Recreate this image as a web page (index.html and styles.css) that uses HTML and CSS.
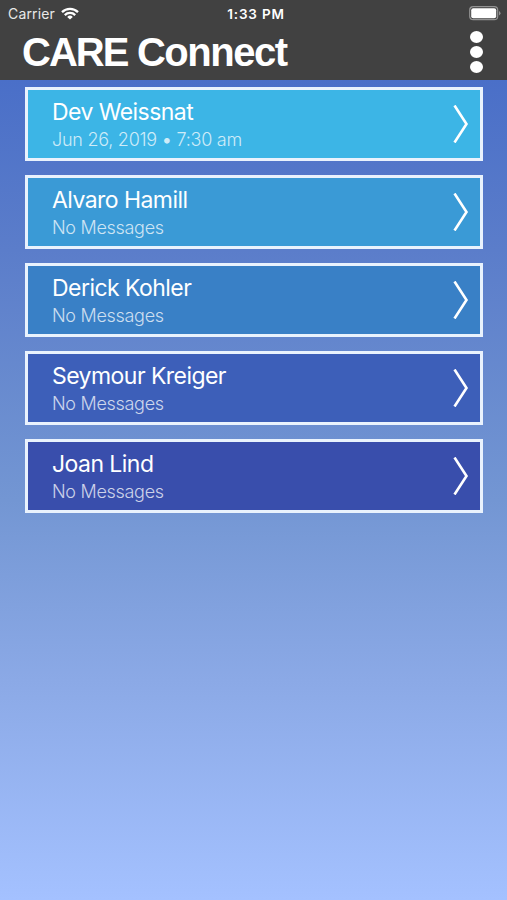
FILE: index.html
```
<!DOCTYPE html>
<html lang="en">

<head>
    <meta charset="UTF-8">
    <title>CARE Connect</title>
    <link rel="stylesheet" href="styles.css">
</head>

<body>
    <header class="header">
        <div class="status-bar">
            <div class="carrier">
                <span>Carrier</span>
                <svg class="wifi" width="18" height="13" viewBox="0 0 18 13" fill="none" stroke="#fff" stroke-width="2.3">
                    <path d="M1 5.1a11.4 11.4 0 0 1 16 0" />
                    <path d="M3.8 8.1a7.4 7.4 0 0 1 10.4 0" />
                    <path d="M9 12.6L6.2 9.9a4 4 0 0 1 5.6 0z" fill="#fff" stroke="none" />
                </svg>
            </div>
            <span class="time">1:33 PM</span>
            <svg class="battery" width="32" height="15" viewBox="0 0 32 15">
                <rect x="0.7" y="0.7" width="28" height="13" rx="3.5" fill="none" stroke="#929292" stroke-width="1.2" />
                <rect x="2.2" y="2.2" width="25" height="10" rx="2" fill="#fff" />
                <path d="M30 5v4.6q1.5-.8 1.5-2.3T30 5z" fill="#929292" />
            </svg>
        </div>
        <div class="title-bar">
            <h1 class="title"><span class="title-care">CARE</span> Connect</h1>
            <div class="menu">
                <span class="dot"></span>
                <span class="dot"></span>
                <span class="dot"></span>
            </div>
        </div>
    </header>

    <main class="list">
        <div class="card card-1">
            <div>
                <div class="name">Dev Weissnat</div>
                <div class="info info-date">Jun 26, 2019 <b>•</b> 7:30 am</div>
            </div>
            <svg class="arrow" width="16" height="38" viewBox="0 0 16 38">
                <path d="M1.5 0.5L13.5 19L1.5 37.5" />
            </svg>
        </div>
        <div class="card card-2">
            <div>
                <div class="name">Alvaro Hamill</div>
                <div class="info">No Messages</div>
            </div>
            <svg class="arrow" width="16" height="38" viewBox="0 0 16 38">
                <path d="M1.5 0.5L13.5 19L1.5 37.5" />
            </svg>
        </div>
        <div class="card card-3">
            <div>
                <div class="name">Derick Kohler</div>
                <div class="info">No Messages</div>
            </div>
            <svg class="arrow" width="16" height="38" viewBox="0 0 16 38">
                <path d="M1.5 0.5L13.5 19L1.5 37.5" />
            </svg>
        </div>
        <div class="card card-4">
            <div>
                <div class="name">Seymour Kreiger</div>
                <div class="info">No Messages</div>
            </div>
            <svg class="arrow" width="16" height="38" viewBox="0 0 16 38">
                <path d="M1.5 0.5L13.5 19L1.5 37.5" />
            </svg>
        </div>
        <div class="card card-5">
            <div>
                <div class="name">Joan Lind</div>
                <div class="info">No Messages</div>
            </div>
            <svg class="arrow" width="16" height="38" viewBox="0 0 16 38">
                <path d="M1.5 0.5L13.5 19L1.5 37.5" />
            </svg>
        </div>
    </main>
</body>

</html>
```
FILE: styles.css
```
* {
    box-sizing: border-box;
}

body {
    margin: 0;
    height: 900px;
    overflow: hidden;
    font-family: Inter, "Liberation Sans", sans-serif;
    color: #fff;
    background: linear-gradient(#4a6fc8 80px, #5b7dca 250px, #7396d3 500px, #8ba9e6 680px, #a4c1ff 900px);
}

.header {
    height: 80px;
    background: #414141;
}

.status-bar {
    display: grid;
    grid-template-columns: 1fr auto 1fr;
    align-items: center;
    height: 27px;
    padding: 0 6px 0 8px;
}

.carrier {
    display: flex;
    align-items: center;
    gap: 6px;
    font-size: 14px;
    letter-spacing: 0.15px;
    color: #e8e8e8;
}

.time {
    margin-left: 3px;
    font-size: 13.5px;
    font-weight: 600;
    letter-spacing: 0.8px;
}

.battery {
    justify-self: end;
}

.title-bar {
    display: flex;
    justify-content: space-between;
    align-items: center;
    height: 50px;
    padding: 0 24px 0 22px;
}

.title {
    margin: 0;
    font-family: "Liberation Sans", sans-serif;
    font-size: 40px;
    font-weight: bold;
    line-height: 50px;
    letter-spacing: -1.5px;
}

.title-care {
    letter-spacing: -2px;
}

.menu {
    display: flex;
    flex-direction: column;
    gap: 2.6px;
}

.dot {
    width: 13px;
    height: 12px;
    border-radius: 50%;
    background: #fff;
}

.list {
    display: flex;
    flex-direction: column;
    gap: 14px;
    padding: 7px 24px 0 25px;
}

.card {
    display: flex;
    justify-content: space-between;
    height: 74px;
    padding: 8px 11px 0 24px;
    border: 3px solid #e9f2fd;
}

.card-1 {
    background: #3cb5e6;
}

.card-2 {
    background: #3a9ad6;
}

.card-3 {
    background: #3980c6;
}

.card-4 {
    background: #3d5fb9;
}

.card-5 {
    background: #394eac;
}

.name {
    font-size: 23px;
    line-height: 28px;
    letter-spacing: -0.55px;
}

.info {
    font-size: 18px;
    font-weight: 300;
    line-height: 27px;
    letter-spacing: -0.3px;
    color: rgba(255, 255, 255, 0.75);
}

.info-date {
    letter-spacing: -0.25px;
}

.arrow {
    margin-top: 7px;
    fill: none;
    stroke: #fff;
    stroke-width: 2.6;
}
```
